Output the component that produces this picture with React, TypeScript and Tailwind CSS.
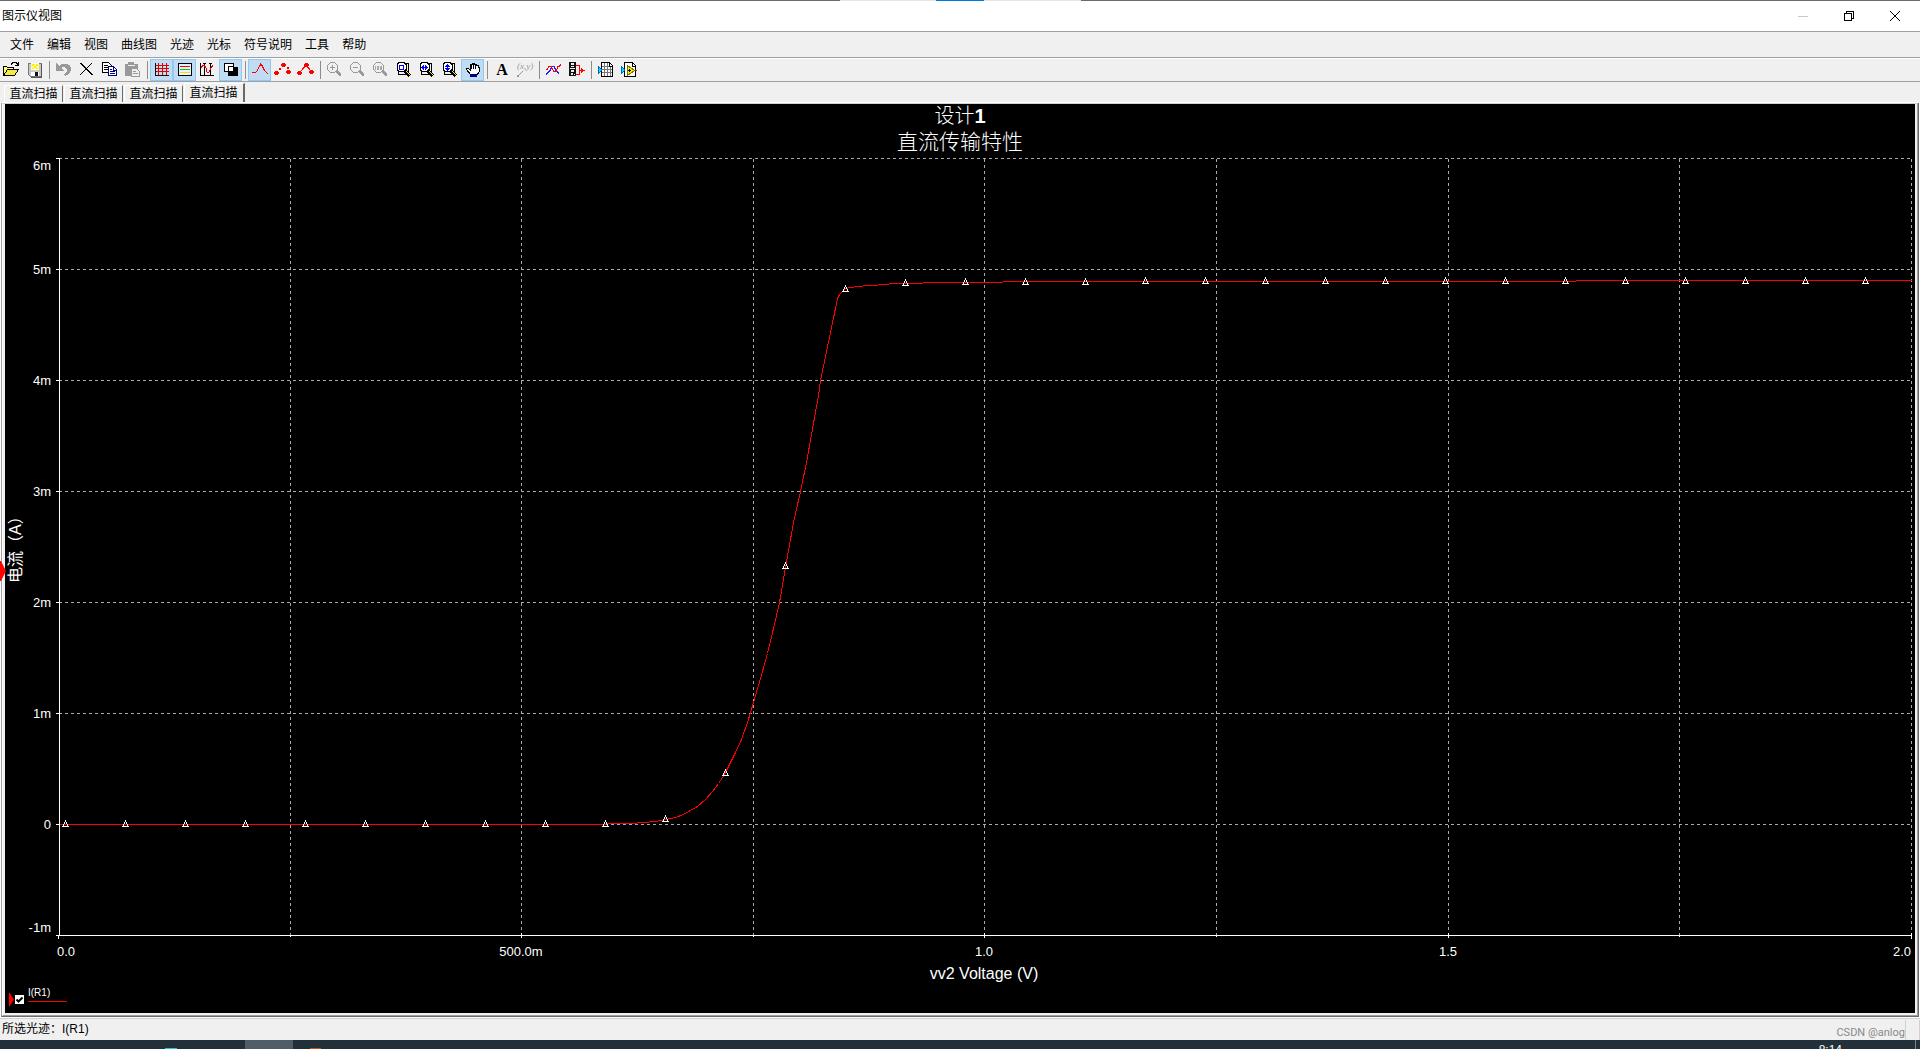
import React from "react";

const UI_FONT = "font-['Liberation_Sans','Noto_Sans_CJK_SC',sans-serif]";
const MENU = ["文件", "编辑", "视图", "曲线图", "光迹", "光标", "符号说明", "工具", "帮助"];
const TABS = ["直流扫描", "直流扫描", "直流扫描", "直流扫描"];

const Icon = ({ children }: { children: React.ReactNode }) => (
  <svg width="16" height="16" viewBox="0 0 16 16" fill="none" shapeRendering="crispEdges" className="overflow-visible" aria-hidden="true">
    {children}
  </svg>
);

const OpenIcon = () => (
  <Icon>
    <path d="M-1 14V4h3l1 1h6v3" fill="#ffff66" stroke="#000" />
    <path d="M-.5 13.5L3.5 7.5H14.5L10.5 13.5Z" fill="#f4e84a" stroke="#000" />
    <path d="M7 2.5l2-2h3l2 2M14.5 0v4M11 3.5h4" stroke="#000" />
  </Icon>
);
const SaveIcon = () => (
  <Icon>
    <path d="M1.5 1.5h13v13h-11l-2-2z" fill="#c8c8c8" stroke="#777" />
    <path d="M4 1h8v7H4z" fill="#fff" />
    <path d="M5 2h2v2H5zM9 2h2v2H9zM7 4h2v2H7zM5 6h2v1H5zM9 6h2v1H9z" fill="#ffee00" />
    <path d="M4 2h8v5H4z" fill="#ffee00" fillOpacity=".4" />
    <path d="M4 10h8v4H4z" fill="#fff" />
    <path d="M8 10h3v4H8z" fill="#111" />
    <path d="M14 2v13H4" stroke="#555" />
  </Icon>
);
const UndoIcon = () => (
  <Icon>
    <path d="M0 1v8h8L5 6c3-2 6-1 6 2 0 2-1 3-3 5l1 1c4-1 6-4 6-7 0-6-8-7-12-3z" fill="#999" />
  </Icon>
);
const DeleteIcon = () => (
  <Icon>
    <path d="M1 1l12 12M13 1L1 13M2 1l12 12" stroke="#000" />
  </Icon>
);
const CopyIcon = () => (
  <Icon>
    <path d="M.5 .5h6l3 3v7h-9z" fill="#fff" stroke="#000" />
    <path d="M2 3.5h4M2 5.5h5M2 7.5h5" stroke="#000" />
    <path d="M6.5 4.5h5l3 3v6h-8z" fill="#fff" stroke="#000080" />
    <path d="M11.5 4v4h3M8 7.5h2M8 9.5h5M8 11.5h5" stroke="#000080" />
  </Icon>
);
const PasteIcon = () => (
  <Icon>
    <path d="M0 2h3V0h6v2h4v12H0z" fill="#999" />
    <path d="M3 3h7v1H3z" fill="#eee" />
    <path d="M6.5 6.5h5l3 3v5h-8z" fill="#eee" stroke="#999" />
    <path d="M8 9.5h3M8 11.5h5" stroke="#999" />
  </Icon>
);
const GridIcon = () => (
  <Icon>
    <path d="M4.5 1v12M8.5 1v12M12.5 1v12M2 3.5h13M2 6.5h13M2 9.5h13" stroke="#e00000" />
    <path d="M1.5 1v12.5H15" stroke="#111" />
  </Icon>
);
const LegendIcon = () => (
  <Icon>
    <path d="M1.5 1.5h13v12h-13z" fill="#e4f2fc" stroke="#000" />
    <path d="M3 4h10v1H3z" fill="#ff0000" />
    <path d="M3 7h10v1H3z" fill="#00d000" />
    <path d="M3 10h10v1H3z" fill="#f0e000" />
  </Icon>
);
const CursorIcon = () => (
  <Icon>
    <path d="M.5 1v13M0 13.5h14M4.5 1v12M10.5 1v12M3 1.5h3M9 1.5h3" stroke="#000" />
    <path d="M1 6l2-3h1l2 3 1 4h2l2-4 2-3" stroke="#ee0000" />
  </Icon>
);
const InvertIcon = () => (
  <Icon>
    <path d="M5 5h10v9H5z" fill="#000" />
    <path d="M1.5 1.5h9v8h-9z" fill="#fff" stroke="#000" />
    <path d="M6 5h4v4H6z" fill="#fff" />
    <path d="M5.5 9V4.5H10" stroke="#000" />
  </Icon>
);
const TraceIcon = () => (
  <Icon>
    <path d="M0 10.5h4M4 9.5h1M5.5 9V7M6.5 7V5M7.5 5V3M8.5 4V1M9.5 2v2M10.5 3v3M11.5 5v3M12.5 7v2M13 9.5h1M14.5 10v1M15 11.5h1" stroke="#ff0000" />
  </Icon>
);
const Dots = () => (
  <path d="M0 9h3v1h1v2h-1v1h-3v-1h-1v-2h1zM7 1h3v1h1v2h-1v1h-3v-1h-1v-2h1zM12 8h3v1h1v2h-1v1h-3v-1h-1v-2h1z" fill="#ff0000" />
);
const PointsIcon = () => (
  <Icon>
    <Dots />
    <path d="M4 6h2v2H4zM12 5h2v2h-2z" fill="#ff0000" />
  </Icon>
);
const TracePointsIcon = () => (
  <Icon>
    <Dots />
    <path d="M3 9l5-6 5 6" stroke="#ff0000" />
  </Icon>
);
const Lens = ({ label }: { label: string }) => (
  <Icon>
    <path d="M3 .5h5M3 10.5h5M.5 3v5M10.5 3v5M1.5 2v1M2 1.5h1M8 1.5h1M9.5 2v1M1.5 8v1M2 9.5h1M8 9.5h1M9.5 8v1" stroke="#999" />
    <path d="M9 9l5 5M10 9l4 4" stroke="#999" strokeWidth="2" />
    {label !== "fit" && <path d="M3 5h5v1H3z" fill="#999" />}
    {label === "in" && <path d="M5 3h1v5H5z" fill="#999" />}
    {label === "fit" && <path d="M2 4h1v4H2zM4 4h2v4H4zM7 4h2v4H7z" fill="#aaa" />}
  </Icon>
);
const AreaLens = ({ mode }: { mode: string }) => (
  <Icon>
    <path d="M7 1.5h5.5V10M2 12.5h8M2.5 10v3" stroke="#000" />
    <path d="M3 .5h5l2 2v5l-2 2H3l-2-2v-5z" fill="#fff" stroke="#000" />
    <path d="M9 9l5 5" stroke="#000" strokeWidth="3" />
    <path d="M10 9l4 4" stroke="#ffee00" strokeWidth="1" />
    {mode === "box" && <path d="M3.5 3.5h4v4h-4z" stroke="#0000ff" strokeWidth="1" />}
    {mode === "x" && <path d="M2 5h7v1H2zM3 4h1v3H3zM4 3h1v5H4zM6 3h1v5H6zM7 4h1v3H7z" fill="#0000ff" />}
    {mode === "y" && <path d="M5 2h1v7H5zM4 3h3v1H4zM3 4h5v1H3zM3 6h5v1H3zM4 7h3v1H4z" fill="#0000ff" />}
  </Icon>
);
const HandIcon = () => (
  <Icon>
    <path d="M5.5 12.5l-4-5v-1h2l1.5 1.5V2.5h2V1h2v1h2v1h2v2h1v5l-1.5 2.5z" fill="#fff" stroke="#000" />
    <path d="M6.5 2v5M8.5 2v5M10.5 3v4" stroke="#000" />
    <path d="M5 12h7v3H5z" fill="#000080" />
  </Icon>
);
const LabelIcon = () => (
  <span className="block w-4 text-center font-['Liberation_Serif',serif] text-[16px] leading-4 font-bold">A</span>
);
const CoordIcon = () => (
  <span className="relative block h-4 w-4">
    <span className="absolute top-0 left-0 font-['Liberation_Serif',serif] text-[9px] leading-[9px] whitespace-nowrap text-[#999] italic">(x,y)</span>
    <svg className="absolute top-2 left-0" width="8" height="8" viewBox="0 0 8 8" shapeRendering="crispEdges">
      <path d="M0 5h2v2H0z" fill="#999" />
      <path d="M2 5l4-4" stroke="#999" />
    </svg>
  </span>
);
const WavesIcon = () => (
  <Icon>
    <path d="M0 12.5l4-4 2-4h2l2 4 3 3" stroke="#2020ff" />
    <path d="M0 7.5h1l2-3M3 4.5h2l3 5h2l2-5h1l2-2" stroke="#ff0000" />
  </Icon>
);
const ExportIcon = () => (
  <Icon>
    <path d="M0 0h7v14H0z" fill="#111" />
    <path d="M2 1h3v2H2zM2 4h3v1H2zM1 6h5v1H1zM2 8h3v2H2zM2 11h2v2H2zM5 12h1v1H5z" fill="#eee" />
    <path d="M7 3.5h3.5v9H7M10 8.5h4" stroke="#ff0000" />
    <path d="M12 6h1v1h1v1h2v1h-2v1h-1v1h-1z" fill="#ff0000" />
  </Icon>
);
const SheetIcon = () => (
  <Icon>
    <path d="M3.5 .5h8l3 3v11h-11z" fill="#fff" stroke="#000" />
    <path d="M4 4.5h10M4 7.5h10M4 10.5h10M6.5 1v13M9.5 1v13M12.5 4v10" stroke="#777" />
    <path d="M11.5 1v3h3" stroke="#000" />
    <path d="M0 4v8l4-4z" fill="#00e5ff" stroke="#0066cc" />
  </Icon>
);
const ScopeIcon = () => (
  <Icon>
    <path d="M3.5 .5h8l3 3v11h-11z" fill="#fff" stroke="#000" />
    <path d="M11.5 1v3h3" stroke="#000" />
    <path d="M0 4v8l4-4z" fill="#00e5ff" stroke="#0066cc" />
    <path d="M6 3.5v10l8-5z" fill="#ffee00" stroke="#777700" />
    <path d="M7 8.5h3M8.5 7v3" stroke="#000" />
    <path d="M14 8.5h2" stroke="#ff0000" />
  </Icon>
);

type Tool = { name: string; icon: React.ReactNode; on?: boolean };
const TOOL_GROUPS: Tool[][] = [
  [
    { name: "打开", icon: <OpenIcon /> },
    { name: "保存", icon: <SaveIcon /> },
  ],
  [
    { name: "撤消", icon: <UndoIcon /> },
    { name: "删除", icon: <DeleteIcon /> },
    { name: "复制", icon: <CopyIcon /> },
    { name: "粘贴", icon: <PasteIcon /> },
  ],
  [
    { name: "网格", icon: <GridIcon />, on: true },
    { name: "图例", icon: <LegendIcon />, on: true },
    { name: "光标", icon: <CursorIcon /> },
    { name: "黑白", icon: <InvertIcon />, on: true },
  ],
  [
    { name: "线", icon: <TraceIcon />, on: true },
    { name: "点", icon: <PointsIcon /> },
    { name: "线和点", icon: <TracePointsIcon /> },
  ],
  [
    { name: "放大", icon: <Lens label="in" /> },
    { name: "缩小", icon: <Lens label="out" /> },
    { name: "缩放复原", icon: <Lens label="fit" /> },
    { name: "缩放区域", icon: <AreaLens mode="box" /> },
    { name: "水平缩放", icon: <AreaLens mode="x" /> },
    { name: "垂直缩放", icon: <AreaLens mode="y" /> },
    { name: "平移", icon: <HandIcon />, on: true },
  ],
  [
    { name: "文本", icon: <LabelIcon /> },
    { name: "坐标", icon: <CoordIcon /> },
  ],
  [
    { name: "叠加光迹", icon: <WavesIcon /> },
    { name: "添加光迹", icon: <ExportIcon /> },
  ],
  [
    { name: "导出表格", icon: <SheetIcon /> },
    { name: "导出测量", icon: <ScopeIcon /> },
  ],
];

const Toolbar = () => (
  <div className="flex h-[23px] shrink-0 items-start border-b border-[#a0a0a0]" role="toolbar">
    {TOOL_GROUPS.map((group, g) => (
      <React.Fragment key={g}>
        {g > 0 && (
          <div className="flex h-[22px] w-[6px] justify-center py-[2px]">
            <div className="w-px bg-[#8c8c8c]" />
          </div>
        )}
        {group.map((t) => (
          <button
            key={t.name}
            aria-label={t.name}
            aria-pressed={!!t.on}
            className={
              t.on
                ? "flex h-[22px] w-[23px] items-center justify-start border border-[#90c8f6] bg-[#c0dcf3] pl-[3px]"
                : "flex h-[22px] w-[23px] items-center justify-start pl-1"
            }
          >
            {t.icon}
          </button>
        ))}
      </React.Fragment>
    ))}
  </div>
);

const LEFT = 54;
const RIGHT = 1906;
const TOP = 54;
const UNIT = 111;
const BASE = 831;
const X_LINES = [285, 516, 748, 979, 1211, 1443, 1674, 1906];
const Y_TICKS = [
  { label: "6m", line: 54, text: 66 },
  { label: "5m", line: 165, text: 170 },
  { label: "4m", line: 276, text: 281 },
  { label: "3m", line: 387, text: 392 },
  { label: "2m", line: 498, text: 503 },
  { label: "1m", line: 609, text: 614 },
  { label: "0", line: BASE - UNIT, text: 725 },
  { label: "-1m", line: BASE, text: 828 },
];
const CURVE: [number, number][] = [
  [54, 720], [600, 720], [601, 719], [626, 719], [638, 718], [650, 717], [660, 715], [670, 713], [678, 710],
  [685, 706], [692, 702], [700, 695], [707, 687], [713, 679], [719, 670], [722, 664], [726, 656], [730, 648],
  [736, 635], [742, 618], [748, 598], [755, 574], [762, 549], [768, 524], [774, 498], [780, 463], [788, 418],
  [795, 387], [801, 358], [813, 291], [815, 276], [825, 228], [832, 194], [834, 190], [836, 188], [840, 184],
  [845, 183], [853, 182], [863, 181], [883, 180], [884, 179], [917, 179], [918, 178], [997, 178], [998, 177],
  [1570, 177], [1571, 176], [1906, 176],
];
const MARKERS: [number, number][] = [
  ...Array.from({ length: 10 }, (_, i): [number, number] => [60 + i * 60, 720]),
  [660, 715], [720, 669], [780, 462], [840, 185], [900, 179], [960, 178],
  ...Array.from({ length: 9 }, (_, i): [number, number] => [1020 + i * 60, i < 2 ? 178 : 177]),
  ...Array.from({ length: 6 }, (_, i): [number, number] => [1560 + i * 60, 177]),
];

const Chart = () => (
  <svg className="block h-full w-full bg-black" viewBox="0 0 1910 909" preserveAspectRatio="none" role="img" aria-label="直流传输特性">
    <g stroke="#aaaaaa" strokeDasharray="3 3" shapeRendering="crispEdges">
      {Y_TICKS.slice(0, 7).map((t) => (
        <path key={t.label} d={`M${LEFT} ${t.line + 0.5}H${RIGHT}`} />
      ))}
      {X_LINES.map((x) => (
        <path key={x} d={`M${x + 0.5} ${TOP + 1}V${BASE}`} />
      ))}
    </g>
    <g stroke="#fff" shapeRendering="crispEdges">
      <path d={`M${LEFT + 0.5} ${TOP}V${BASE}M${LEFT - 3} ${BASE + 0.5}H${RIGHT + 1}`} />
      {Y_TICKS.map((t) => (
        <path key={t.label} d={`M${LEFT - 3} ${t.line + 0.5}h3`} />
      ))}
      <path d={`M53.5 ${BASE}v4M516.5 ${BASE - 2}v5M979.5 ${BASE - 2}v5M1443.5 ${BASE - 2}v5M1906.5 ${BASE - 2}v6M285.5 ${BASE}v2M748.5 ${BASE}v2M1211.5 ${BASE}v2M1674.5 ${BASE}v2`} />
    </g>
    <polyline points={CURVE.map(([x, y]) => `${x + 0.5},${y + 0.5}`).join(" ")} fill="none" stroke="#ff0000" shapeRendering="crispEdges" />
    <g stroke="#fff" fill="none" shapeRendering="crispEdges">
      {MARKERS.map(([x, y]) => (
        <path key={x} d={`M${x - 3} ${y + 2.5}h7M${x - 1.5} ${y + 2}v-2M${x - 0.5} ${y}v-2M${x + 0.5} ${y - 2}v-2M${x + 1.5} ${y - 2}v2M${x + 2.5} ${y}v2`} />
      ))}
    </g>
    <g fill="#fff" className={UI_FONT}>
      <text x="955" y="19" textAnchor="middle" fontSize="20" fontWeight="300">
        设计<tspan fontWeight="700">1</tspan>
      </text>
      <text x="955" y="45" textAnchor="middle" fontSize="21" fontWeight="300">直流传输特性</text>
      <g fontSize="13" textAnchor="end">
        {Y_TICKS.map((t) => (
          <text key={t.label} x="46" y={t.text}>{t.label}</text>
        ))}
        <text x="1906" y="852">2.0</text>
      </g>
      <g fontSize="13">
        <text x="52" y="852">0.0</text>
        <text x="516" y="852" textAnchor="middle">500.0m</text>
        <text x="979" y="852" textAnchor="middle">1.0</text>
        <text x="1443" y="852" textAnchor="middle">1.5</text>
      </g>
      <text x="979" y="875" textAnchor="middle" fontSize="16">vv2 Voltage (V)</text>
      <text transform="translate(16 479) rotate(-90)" fontSize="16">电流（A）</text>
    </g>
  </svg>
);

const Legend = () => (
  <label className="absolute bottom-[6px] left-1 flex items-end text-white">
    <svg width="5" height="15" viewBox="0 0 5 15" aria-hidden="true">
      <path d="M0 0l5 7.5L0 15z" fill="#ff0000" />
    </svg>
    <span className="relative mb-[3px] ml-px block h-[9px] w-[9px]">
      <input type="checkbox" defaultChecked className="peer block h-[9px] w-[9px] appearance-none bg-white" />
      <svg className="pointer-events-none absolute inset-0 hidden peer-checked:block" viewBox="0 0 9 9" aria-hidden="true">
        <path d="M1.5 4.5l2 2 4-4" stroke="#000" strokeWidth="2" fill="none" />
      </svg>
    </span>
    <span className="mb-[5px] ml-1 w-[39px] border-b border-[#ff0000] pb-[2px] text-[10px] leading-[13px]">I(R1)</span>
  </label>
);

export default function App() {
  return (
    <div className={`flex h-screen flex-col overflow-hidden bg-[#f0f0f0] text-[12px] text-black ${UI_FONT}`}>
      <div className="flex h-px shrink-0 justify-center bg-[#6b6b6b]">
        <div className="flex w-[241px] justify-center bg-[#e5e5e5]">
          <div className="w-12 bg-[#0078d7]" />
        </div>
      </div>
      <header className="flex h-[31px] shrink-0 items-center justify-between border-b border-[#a0a0a0] bg-white pr-[2px] pl-[2px]">
        <h1>图示仪视图</h1>
        <div className="flex h-full pb-px">
          <button aria-label="最小化" className="flex w-[46px] items-center justify-center">
            <svg width="10" height="10" viewBox="0 0 10 10" shapeRendering="crispEdges"><path d="M0 5.5h10" stroke="#c8c8c8" /></svg>
          </button>
          <button aria-label="还原" className="flex w-[46px] items-center justify-center">
            <svg width="10" height="10" viewBox="0 0 10 10" shapeRendering="crispEdges" fill="none"><path d="M.5 2.5h7v7h-7zM2.5 2V.5h7v7H8" stroke="#000" /></svg>
          </button>
          <button aria-label="关闭" className="flex w-[46px] items-center justify-center">
            <svg width="10" height="10" viewBox="0 0 10 10"><path d="M0 0l10 10M10 0L0 10" stroke="#000" /></svg>
          </button>
        </div>
      </header>
      <nav className="flex h-[26px] shrink-0 items-center gap-[13px] border-b border-[#a0a0a0] pl-[10px]">
        {MENU.map((m) => (
          <button key={m}>{m}</button>
        ))}
      </nav>
      <div className="h-px shrink-0 bg-white" />
      <Toolbar />
      <div className="flex h-5 shrink-0 items-end pl-1" role="tablist">
        {TABS.map((t, i) => (
          <button
            key={i}
            role="tab"
            aria-selected={i === 3}
            className={
              i === 3
                ? "h-[19px] w-[61px] border-t border-r-2 border-l border-t-white border-r-[#696969] border-l-white pr-px pb-px leading-4"
                : "mr-px h-[17px] w-[59px] border-t border-r border-l border-t-white border-r-[#696969] border-l-white text-center leading-4"
            }
          >
            {t}
          </button>
        ))}
      </div>
      <main className="flex min-h-0 flex-1 flex-col border-t border-r border-b border-l border-t-white border-r-white border-b-white border-l-white">
        <div className="relative flex min-h-0 flex-1 border-r border-b border-l border-r-[#696969] border-b-[#696969] border-l-[#a0a0a0]">
          <div className="min-h-0 flex-1 border-t border-r border-b border-l border-t-[#d0d0d0] border-r-[#a0a0a0] border-b-[#a0a0a0] border-l-white">
            <div className="h-full border-r-2 border-b-2 border-l-2 border-[#f0f0f0]">
              <div className="relative h-full">
                <Chart />
                <Legend />
              </div>
            </div>
          </div>
          <svg className="absolute top-[458px] left-[-2px]" width="6" height="20" viewBox="0 0 6 20" aria-hidden="true">
            <path d="M0 0h1l5 10-5 10H0z" fill="#ff0000" />
          </svg>
        </div>
      </main>
      <footer className="flex h-[22px] shrink-0 items-center justify-between border-t border-[#d0d0d0] pl-[2px]">
        <p className="pb-px">所选光迹：I(R1)</p>
        <div className="flex h-full items-end gap-[13px] text-[11px] text-[#8a8a8a]">
          <p className="flex h-5 items-end border-r border-[#d0d0d0] font-[Roboto,sans-serif] leading-[14px]">CSDN @anlog</p>
          <div className="h-5 border-r border-[#d0d0d0]" />
        </div>
      </footer>
      <div className="flex h-[9px] shrink-0 overflow-hidden bg-[#22303a] text-white">
        <div className="flex w-[245px] items-end justify-end pr-[68px]">
          <div className="h-px w-3 bg-[#2fc4d4]" />
        </div>
        <div className="w-12 bg-[#505c66]" />
        <div className="flex w-7 items-end justify-end">
          <div className="h-px w-[11px] bg-[#d8480c]" />
        </div>
        <div className="flex flex-1 justify-end border-r border-[#7a858c] pr-[73px]">
          <time className="pt-[3px] text-[12px] leading-[14px]">8:14</time>
        </div>
        <div className="w-1" />
      </div>
    </div>
  );
}
